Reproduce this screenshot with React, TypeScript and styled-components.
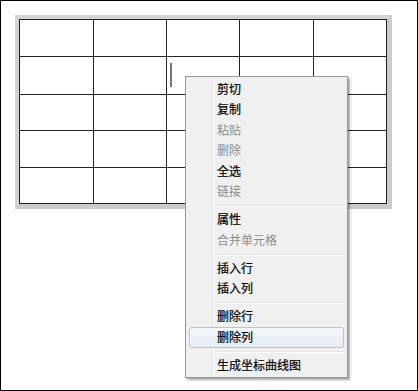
import styled, { createGlobalStyle } from 'styled-components';

const GlobalStyle = createGlobalStyle`
  html, body {
    margin: 0;
    padding: 0;
    background: #ffffff;
  }
  body {
    font-family: "Noto Sans CJK SC", "Noto Sans", sans-serif;
  }
`;

const Canvas = styled.div`
  position: relative;
  box-sizing: border-box;
  width: 418px;
  height: 391px;
  border: 1px solid #000;
  padding: 14px 0 0 14px;
  background: #fff;
`;

const TableFrame = styled.div`
  display: inline-block;
  border: 4px solid #d3d3d3;
  border-right-width: 5px;
  border-bottom-width: 5px;
  border-right-color: #cbcbcb;
  border-bottom-color: #cbcbcb;
`;

const Grid = styled.div`
  display: grid;
  grid-template-columns: 74px 73px 73px 74px 73px;
  grid-template-rows: 37px 38px 36px 37px 36px;
  border-top: 1px solid #222;
  border-left: 1px solid #222;
  background: #fff;
`;

const Cell = styled.div`
  position: relative;
  border-right: 1px solid #222;
  border-bottom: 1px solid #222;
`;

const Caret = styled.span`
  position: absolute;
  left: 3px;
  top: 6px;
  width: 2px;
  height: 24px;
  background: #777;
`;

const Menu = styled.div`
  position: absolute;
  left: 184px;
  top: 75px;
  box-sizing: border-box;
  width: 163px;
  height: 302px;
  padding: 2px 0;
  background: #f0f0f0;
  border: 1px solid #979797;
  box-shadow: 2px 2px 2px rgba(0, 0, 0, 0.35);
  font-size: 12px;

  &::before {
    content: '';
    position: absolute;
    top: 2px;
    bottom: 2px;
    left: 26px;
    width: 1px;
    background: #e2e3e3;
    box-shadow: 1px 0 0 #ffffff;
  }
`;

const Item = styled.div<{ $disabled?: boolean; $active?: boolean }>`
  position: relative;
  box-sizing: border-box;
  height: 20.5px;
  margin: 0 3px;
  padding: 0 0 2px 27px;
  display: flex;
  align-items: center;
  color: ${({ $disabled }) => ($disabled ? '#8d8d8d' : '#000')};
  -webkit-text-stroke: ${({ $disabled }) => ($disabled ? '0' : '0.2px #000')};
  border: 1px solid ${({ $active }) => ($active ? '#a9c6ea' : 'transparent')};
  border-radius: 3px;
  background: ${({ $active }) =>
    $active ? 'linear-gradient(#f4f7fc, #e6edf7)' : 'transparent'};
  white-space: nowrap;
`;

const Separator = styled.div`
  height: 7.5px;
  display: flex;
  align-items: center;
  padding-left: 29px;
  padding-right: 3px;

  &::after {
    content: '';
    flex: 1;
    height: 1px;
    background: #e2e3e3;
    box-shadow: 0 1px 0 #ffffff;
  }
`;

type Entry = { label: string; disabled?: boolean; active?: boolean } | 'sep';

const entries: Entry[] = [
  { label: '剪切' },
  { label: '复制' },
  { label: '粘贴', disabled: true },
  { label: '删除', disabled: true },
  { label: '全选' },
  { label: '链接', disabled: true },
  'sep',
  { label: '属性' },
  { label: '合并单元格', disabled: true },
  'sep',
  { label: '插入行' },
  { label: '插入列' },
  'sep',
  { label: '删除行' },
  { label: '删除列', active: true },
  'sep',
  { label: '生成坐标曲线图' },
];

const App = () => {
  const cells = Array.from({ length: 25 }, (_, i) => i);

  return (
    <>
      <GlobalStyle />
      <Canvas>
        <TableFrame>
          <Grid>
            {cells.map((i) => (
              <Cell key={i}>{i === 7 && <Caret />}</Cell>
            ))}
          </Grid>
        </TableFrame>

        <Menu>
          {entries.map((e, i) =>
            e === 'sep' ? (
              <Separator key={i} />
            ) : (
              <Item key={i} $disabled={e.disabled} $active={e.active}>
                {e.label}
              </Item>
            )
          )}
        </Menu>
      </Canvas>
    </>
  );
};

export default App;
